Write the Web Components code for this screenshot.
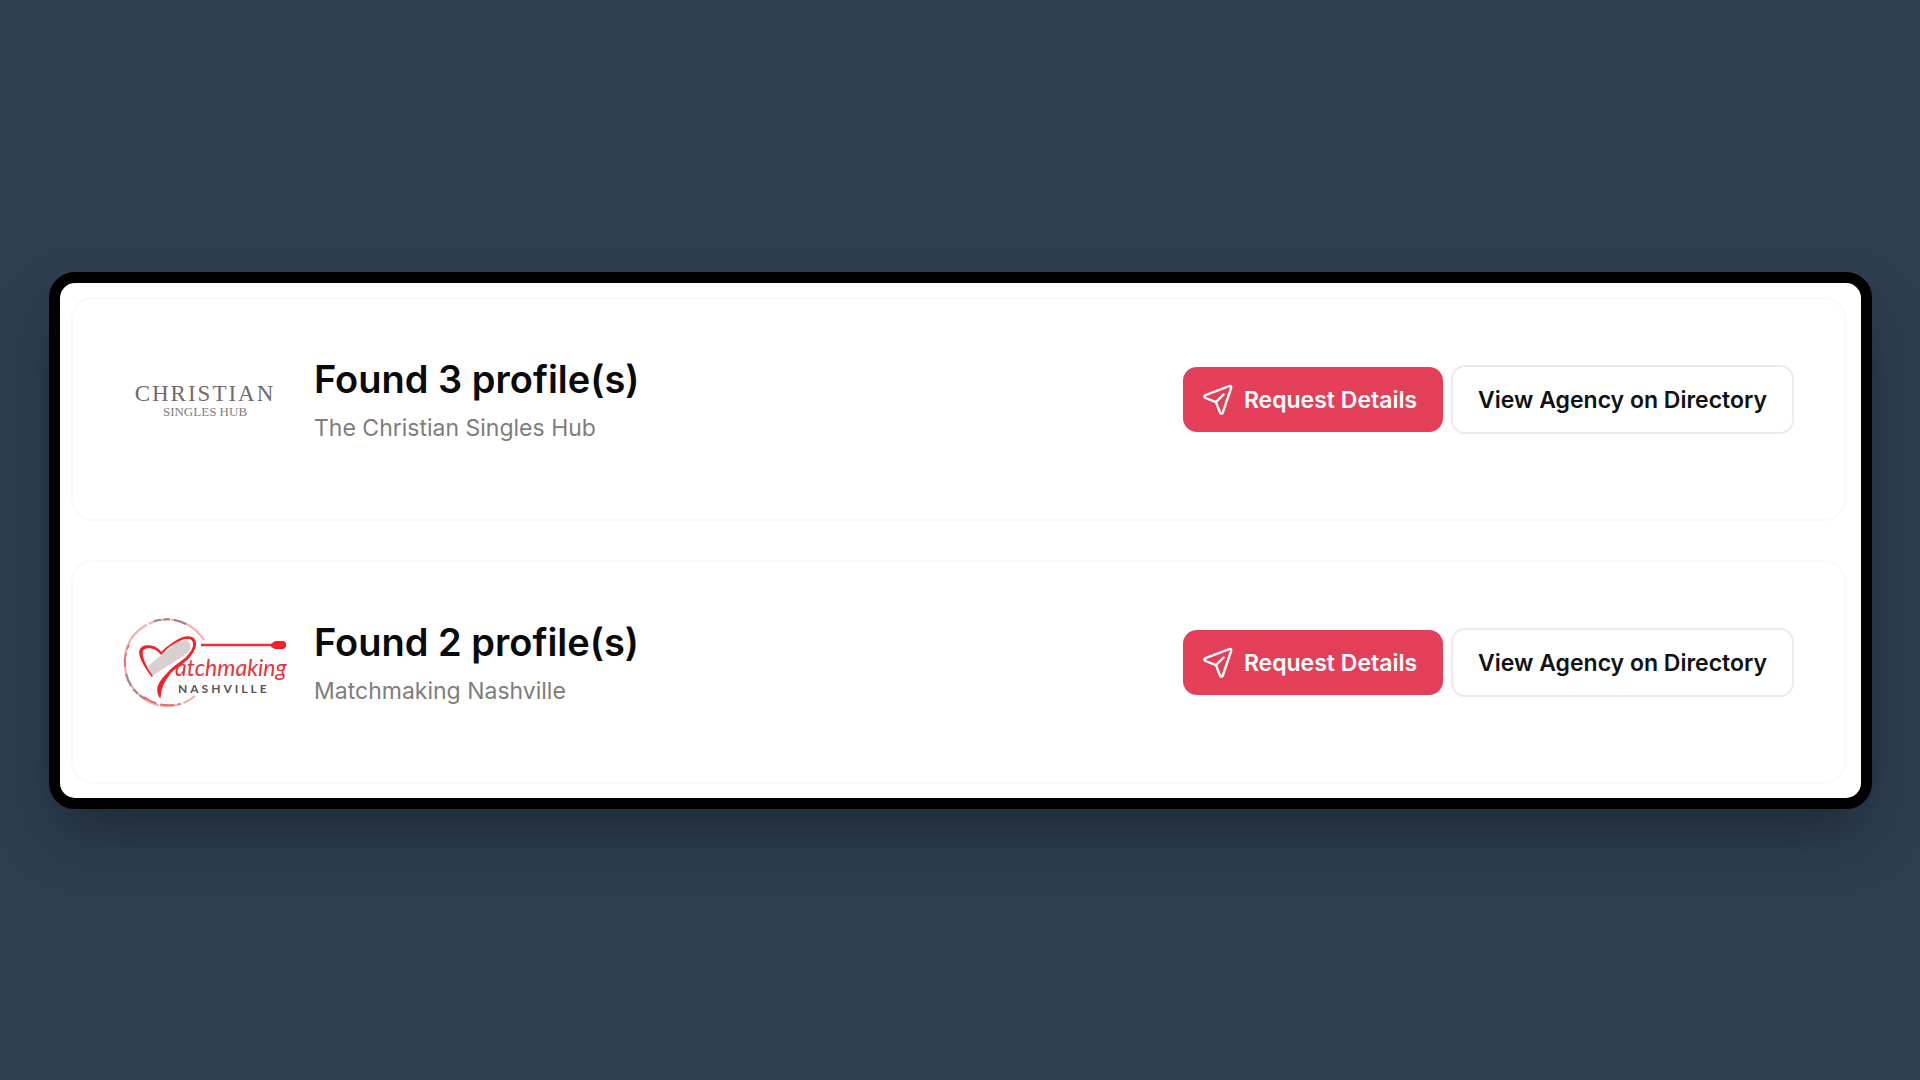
<!DOCTYPE html>
<html lang="en">
<head>
<meta charset="utf-8">
<title>Agency results</title>
<style>
body { margin: 0; background: #2d3e50; font-family: Inter, "Liberation Sans", sans-serif; }
</style>
</head>
<body>
<results-panel>
  <agency-card count="3" name="The Christian Singles Hub"><christian-logo slot="logo"></christian-logo></agency-card>
  <agency-card count="2" name="Matchmaking Nashville"><nashville-logo slot="logo"></nashville-logo></agency-card>
</results-panel>

<template id="results-panel">
  <style>
    :host { display: flex; flex-direction: column; justify-content: center; min-height: 100vh; box-sizing: border-box; padding: 0 48px 0 49px; }
    main { display: flex; flex-direction: column; gap: 39px; padding: 14px 15px 14px 11px; background: #fff; border: 11px solid #000; border-radius: 26px; box-shadow: 0 30px 60px -12px rgba(0,0,0,.38); }
  </style>
  <main><slot></slot></main>
</template>

<template id="agency-card">
  <style>
    :host { display: block; border: 2px solid #f9f9f9; border-radius: 22px; padding: 48px 50px 66px; }
    .row { display: flex; align-items: center; min-height: 106px; gap: 25px; }
    .logo { width: 166px; flex: none; display: grid; place-items: center start; }
    .text { flex: 1; min-width: 0; }
    h2 { margin: 0; font-size: 38px; line-height: 46px; font-weight: 600; color: #0a0a0a; }
    p { margin: 10px 0 0; font-size: 23px; line-height: 32px; color: #807c7c; }
    .actions { display: flex; align-items: center; gap: 8px; }
  </style>
  <div class="row">
    <div class="logo"><slot name="logo"></slot></div>
    <div class="text"><h2></h2><p></p></div>
    <div class="actions">
      <action-button variant="primary">Request Details</action-button>
      <action-button>View Agency on Directory</action-button>
    </div>
  </div>
</template>

<template id="action-button">
  <style>
    :host { display: block; }
    button { display: flex; align-items: center; gap: 10px; box-sizing: border-box; height: 69px; padding: 0 25px; border: 2px solid #eee9ea; border-radius: 14px; background: #fff; color: #101214; font: 600 23px/32px Inter, "Liberation Sans", sans-serif; white-space: nowrap; cursor: pointer; }
    svg { display: none; width: 32px; height: 32px; }
    :host([variant="primary"]) button { height: 65px; padding: 0 26px 0 19px; border: 0; background: #e43f58; color: #fff; }
    :host([variant="primary"]) svg { display: block; }
  </style>
  <button type="button">
    <svg viewBox="0 0 32 32" fill="none" stroke="#fff" stroke-width="2.4" stroke-linecap="round" stroke-linejoin="round" aria-hidden="true"><path d="M29.2 3.8C29.5 2.4 28.8 1.7 27.5 2L3.6 11.1C2 11.8 2 13.4 3.5 14L13.9 18.1L18 28.5C18.5 30 20.3 30 20.8 28.5Z"/><path d="M13.9 18.1L21.6 10.5"/></svg>
    <span><slot></slot></span>
  </button>
</template>

<template id="christian-logo">
  <style>:host { display: block; } svg { display: block; }</style>
  <svg width="164" height="60" viewBox="0 0 164 60" role="img" aria-label="Christian Singles Hub">
    <text x="82" y="31" text-anchor="middle" font-family="Liberation Serif, serif" font-size="23" letter-spacing="2" fill="#706a6b">CHRISTIAN</text>
    <text x="82" y="46" text-anchor="middle" font-family="Liberation Serif, serif" font-size="13" fill="#857c7d">SINGLES HUB</text>
  </svg>
</template>

<template id="nashville-logo">
  <style>:host { display: block; } svg { display: block; }</style>
  <svg width="164" height="92" viewBox="0 0 164 92" fill="none" role="img" aria-label="Matchmaking Nashville">
    <path d="M81 23C70 7 53 0 37 3C14 8 0 26 2 49C4 73 25 91 48 89C58 88 66 84 72 79" stroke="#f0b0b0" stroke-width="2.2" stroke-dasharray="40 1 22 2"/>
    <path d="M63 7C53 2 43 1 31 4M3 57C6 69 13 77 23 82" stroke="#a08586" stroke-width="2" stroke-dasharray="13 4 6 3"/>
    <path d="M21 80C30 87 42 90 57 87M2 50C1 41 3 34 6 28" stroke="#e2686a" stroke-width="1.6" stroke-dasharray="14 4"/>
    <path d="M25 49L54 25Q66 20 68 29C67 35 60 39 54 43L29 59Z" fill="#d9cfd0"/>
    <path d="M29 59C23 51 16 40 17 34C19 26 33 28 38 36C46 28 58 21 65 21C73 22 73 31 64 40C58 46 51 49 46 55C36 65 32 72 37 80C37 73 39 66 47 56C52 50 60 47 66 40C76 28 73 20 65 20C57 20 46 28 38 37C33 30 21 28 19 34C18 40 23 51 29 59Z" fill="#f42127" stroke="#f42127" stroke-width="1.5" stroke-linejoin="round"/>
    <path d="M78 28H150" stroke="#ed3038" stroke-width="2.5"/>
    <path d="M148 27L152 24H161L163 26V30L160 32H152L148 30Z" fill="#fb2024"/>
    <text x="52" y="59" font-family="Lato, sans-serif" font-style="italic" font-size="23" fill="#e93239">atchmaking</text>
    <text x="55" y="76" font-family="Lato, sans-serif" font-weight="700" font-size="12" letter-spacing="3" fill="#575354">NASHVILLE</text>
  </svg>
</template>

<script>
class TemplateElement extends HTMLElement {
  constructor() {
    super();
    this.attachShadow({ mode: "open" }).append(document.getElementById(this.localName).content.cloneNode(true));
  }
}
customElements.define("results-panel", class extends TemplateElement {});
customElements.define("action-button", class extends TemplateElement {});
customElements.define("christian-logo", class extends TemplateElement {});
customElements.define("nashville-logo", class extends TemplateElement {});
customElements.define("agency-card", class extends TemplateElement {
  connectedCallback() {
    this.shadowRoot.querySelector("h2").textContent = `Found ${this.getAttribute("count")} profile(s)`;
    this.shadowRoot.querySelector("p").textContent = this.getAttribute("name");
  }
});
</script>
</body>
</html>
